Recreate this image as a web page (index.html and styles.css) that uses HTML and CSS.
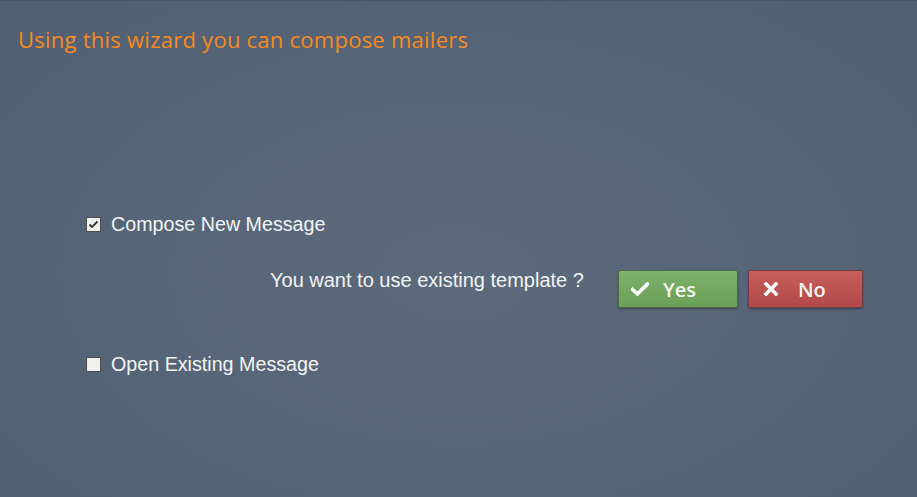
FILE: index.html
```html
<!DOCTYPE html>
<html lang="en">
<head>
    <meta charset="utf-8">
    <title>Mailer wizard</title>
    <link rel="stylesheet" href="styles.css">
</head>
<body>
<main class="wizard">
    <h1 class="wizard-title">Using this wizard you can compose mailers</h1>

    <div class="options">
        <label class="option">
            <input type="checkbox" checked>
            <span>Compose New Message</span>
        </label>

        <div class="question">
            <p class="question-text">You want to use existing template ?</p>
            <div class="buttons">
                <button class="btn btn-yes">
                    <svg width="18" height="14" viewBox="0 0 18 14"><path d="M1.5 7.5 L6.5 12 L16.5 2" fill="none" stroke="#fff" stroke-width="3.6" stroke-linecap="square"/></svg>
                    Yes
                </button>
                <button class="btn btn-no">
                    <svg width="14" height="14" viewBox="0 0 14 14"><path d="M2 2 L12 12 M12 2 L2 12" fill="none" stroke="#fff" stroke-width="3.6" stroke-linecap="square"/></svg>
                    No
                </button>
            </div>
        </div>

        <label class="option">
            <input type="checkbox">
            <span>Open Existing Message</span>
        </label>
    </div>
</main>
</body>
</html>
```

FILE: styles.css
```css
* {
    margin: 0;
    padding: 0;
    box-sizing: border-box;
}

html,
body {
    height: 100%;
}

body {
    background-color: #566476;
    background-image: radial-gradient(ellipse at 50% 55%, #5d6a7c 0%, #566477 55%, #526073 100%);
    border-top: 1px solid #4a566a;
}

/* 标题 */
.wizard-title {
    padding: 23px 18px 0;
    font-family: "Open Sans", sans-serif;
    font-weight: normal;
    font-size: 22px;
    letter-spacing: 0.25px;
    line-height: 30px;
    color: #f78a1d;
}

.options {
    padding-left: 86px;
    margin-top: 158px;
    display: flex;
    flex-direction: column;
}

/* 复选框 */
.option {
    display: flex;
    align-items: center;
    gap: 10px;
    font-family: "Liberation Sans", Arial, sans-serif;
    font-size: 19.7px;
    color: #f2f4f4;
    height: 24px;
}

.option input {
    appearance: none;
    width: 15px;
    height: 15px;
    margin: 0;
    border: 1px solid #4e4e4e;
    background-color: #eef0ee;
}

.option input:checked {
    background-image: url("data:image/svg+xml,%3Csvg xmlns='http://www.w3.org/2000/svg' viewBox='0 0 13 13'%3E%3Cpath d='M2.5 6.5 L5 9 L10.5 3.5' fill='none' stroke='%23333' stroke-width='1.8'/%3E%3C/svg%3E");
    background-size: 13px 13px;
}

.question {
    display: flex;
    align-items: flex-start;
    margin: 32px 0 44px 184px;
}

.question-text {
    font-family: "Liberation Sans", Arial, sans-serif;
    font-size: 20px;
    color: #f2f4f4;
    margin-top: 1px;
}

.buttons {
    display: flex;
    gap: 10px;
    margin-left: 34px;
    margin-top: 2px;
}

/* 按钮 */
.btn {
    height: 38px;
    display: flex;
    align-items: center;
    gap: 14px;
    font-family: "Open Sans", sans-serif;
    font-weight: 600;
    font-size: 20px;
    color: #f4f4ee;
    border: 1px solid #3f4a42;
    border-radius: 2px;
    box-shadow: 0 1px 2px rgba(0, 0, 0, 0.35);
}

.btn-yes {
    width: 120px;
    padding-left: 12px;
    background: linear-gradient(#7db26a, #6a9f58);
    border-color: #4a6a44;
}

.btn-no {
    width: 115px;
    padding-left: 15px;
    gap: 20px;
    background: linear-gradient(#c65f5b, #b2484a);
    border-color: #6e3e44;
}
```
